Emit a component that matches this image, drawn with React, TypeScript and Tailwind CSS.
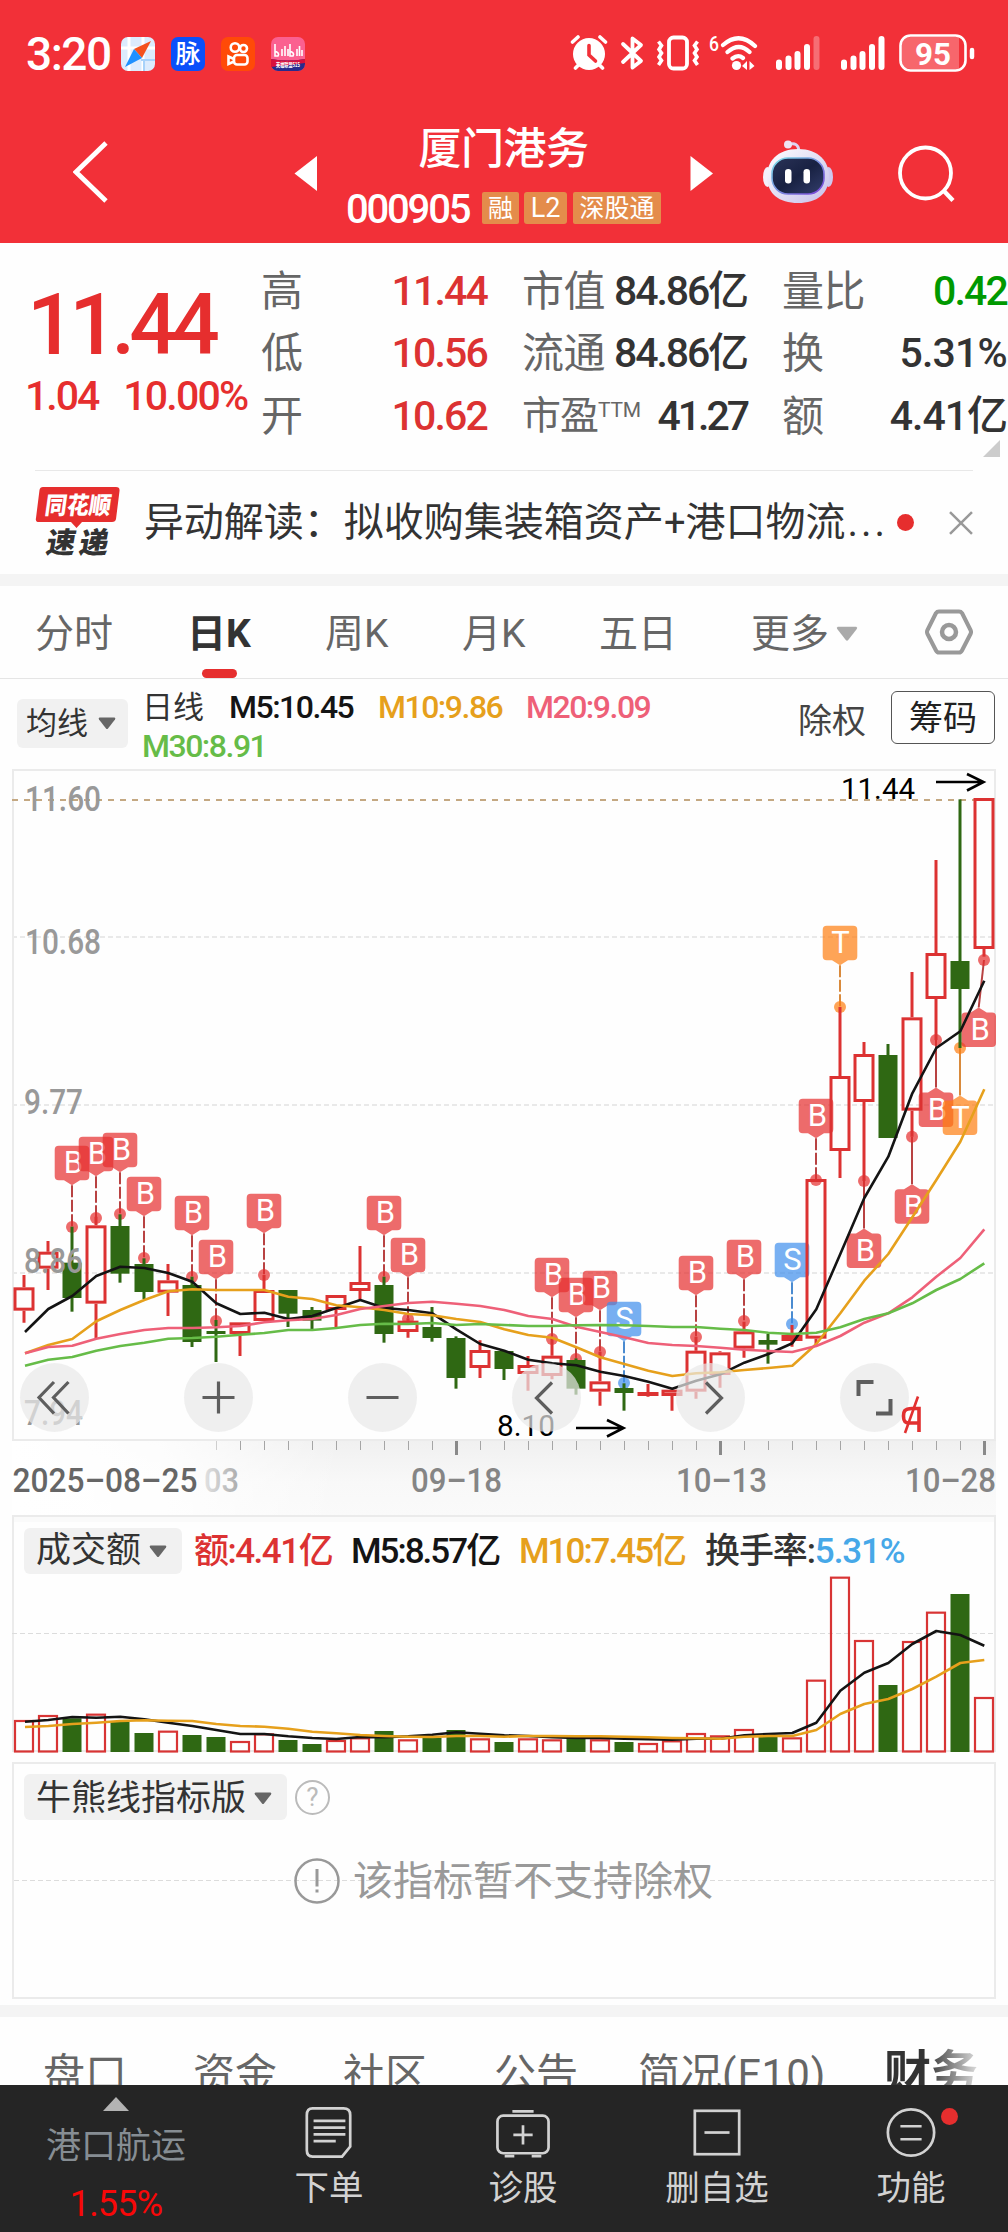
import type { ReactNode } from "react";

type Candle = [up: 0 | 1, high: number, top: number, bottom: number, low: number];

// Vertical chart unit: one third of a pixel, measured from y = 1100.
const CANDLES: Candle[] = [
  [1, 525, 562, 632, 668], [1, 423, 455, 506, 570], [0, 380, 488, 594, 635], [1, 350, 376, 611, 716],
  [0, 343, 378, 521, 548], [0, 475, 492, 576, 597], [1, 492, 541, 578, 648], [0, 530, 555, 726, 741],
  [0, 660, 693, 702, 786], [1, 667, 667, 702, 768], [1, 525, 570, 663, 663], [0, 570, 570, 641, 681],
  [0, 621, 630, 662, 693], [1, 585, 585, 630, 681], [1, 438, 546, 573, 597], [0, 530, 555, 702, 728],
  [1, 655, 662, 696, 713], [0, 621, 681, 714, 725], [0, 709, 714, 834, 866], [1, 721, 750, 804, 834],
  [0, 753, 753, 807, 840], [1, 768, 795, 822, 872], [1, 715, 767, 828, 838], [0, 775, 780, 866, 884],
  [1, 755, 844, 875, 917], [0, 850, 864, 879, 932], [1, 852, 876, 888, 890], [1, 868, 869, 888, 932],
  [1, 710, 752, 875, 896], [1, 754, 757, 825, 863], [1, 665, 694, 746, 773], [0, 702, 720, 734, 791],
  [1, 675, 705, 723, 740], [1, 240, 237, 716, 732], [1, -279, -72, 153, 234], [1, -174, -138, 6, 243],
  [0, -168, -135, 114, 114], [1, -384, -248, 32, 110], [1, -720, -441, -303, -180],
  [0, -902, -417, -333, -156], [1, -906, -906, -453, -430],
];

const MA5 = [696, 627, 588, 528, 500, 504, 519, 545, 610, 642, 638, 657, 648, 624, 600, 624, 630, 640, 688, 732, 752, 779, 790, 796, 815, 828, 845, 866, 842, 823, 788, 762, 730, 628, 462, 294, 170, -20, -156, -206, -358];
const MA10 = [760, 735, 717, 664, 630, 600, 574, 568, 570, 570, 570, 590, 597, 616, 622, 630, 642, 646, 657, 666, 688, 705, 713, 742, 772, 792, 812, 828, 820, 817, 810, 804, 797, 732, 640, 542, 462, 352, 240, 125, -32];
const MA20 = [760, 741, 737, 716, 702, 690, 684, 684, 682, 678, 667, 661, 657, 645, 627, 618, 609, 605, 611, 618, 630, 648, 657, 680, 696, 712, 729, 735, 738, 743, 749, 753, 756, 738, 708, 668, 640, 592, 530, 474, 388];
const MA30 = [797, 779, 771, 752, 738, 728, 716, 714, 710, 704, 699, 690, 690, 684, 675, 671, 672, 669, 675, 672, 675, 678, 678, 676, 675, 676, 678, 681, 681, 686, 690, 698, 702, 698, 682, 657, 640, 610, 570, 537, 490];

const VOLUMES = [660, 645, 655, 641, 666, 699, 692, 705, 711, 723, 700, 720, 732, 720, 712, 693, 718, 714, 690, 715, 726, 715, 718, 714, 718, 726, 729, 721, 699, 706, 687, 710, 712, 539, 230, 420, 555, 423, 335, 282, 591];
const VMA5 = [665, 660, 651, 653, 650, 658, 668, 678, 690, 702, 702, 709, 714, 717, 711, 712, 709, 704, 697, 701, 706, 708, 712, 714, 714, 716, 718, 719, 716, 716, 706, 702, 699, 668, 572, 518, 489, 432, 393, 405, 437];
const VMA10 = [681, 678, 672, 668, 663, 661, 662, 663, 672, 678, 680, 686, 695, 700, 705, 708, 710, 711, 708, 708, 710, 708, 708, 709, 709, 710, 712, 714, 715, 716, 710, 708, 708, 690, 642, 612, 597, 567, 530, 489, 480];

type Mark = { i: number; k: "B" | "S" | "T"; dot: number; down?: boolean; cx?: number };
const MARKS: Mark[] = [
  { i: 2, k: "B", dot: 381 }, { i: 3, k: "B", dot: 354 }, { i: 4, k: "B", dot: 342 }, { i: 5, k: "B", dot: 474 },
  { i: 7, k: "B", dot: 531 }, { i: 8, k: "B", dot: 663 }, { i: 10, k: "B", dot: 525 }, { i: 15, k: "B", dot: 531 },
  { i: 16, k: "B", dot: 657 }, { i: 22, k: "B", dot: 717 }, { i: 23, k: "B", dot: 777 }, { i: 24, k: "B", dot: 756 },
  { i: 25, k: "S", dot: 849 }, { i: 28, k: "B", dot: 711 }, { i: 30, k: "B", dot: 663 }, { i: 32, k: "S", dot: 672 },
  { i: 33, k: "B", dot: 240 }, { i: 34, k: "T", dot: -279 }, { i: 35, k: "B", dot: 243, down: true },
  { i: 37, k: "B", dot: 110, down: true }, { i: 38, k: "B", dot: -180, down: true },
  { i: 39, k: "T", dot: -156, down: true }, { i: 40, k: "B", dot: -420, down: true, cx: 978.7 },
];
const BOX = { B: "#e62e2e", S: "#3f8eec", T: "#ff7e11" };
const STEM = { B: "#b84242", S: "#4a8bd0", T: "#d98a3c" };

const px = (i: number) => 24 + i * 24;
const py = (z: number) => 1100 + z / 3;
const vy = (z: number) => 1500 + z / 3;
const path = (v: number[], y: (z: number) => number) =>
  v.map((z, i) => `${i ? "L" : "M"}${px(i) + (i ? 0.3 : 1)} ${y(z).toFixed(1)}`).join("");

function Marker({ i, k, dot, down, cx }: Mark) {
  const x = px(i);
  const bx = cx ?? x;
  const top = py(dot) + (down ? 52.5 : -81.3);
  const tip = down ? top - 5 : top + 39.5;
  const base = down ? top : top + 34.6;
  return (
    <g>
      <path d={`M${bx} ${tip}L${x} ${py(dot)}`} stroke={STEM[k]} strokeWidth={2} strokeDasharray={down ? undefined : "12 2.5"} />
      <g fill={BOX[k]} opacity={0.7}>
        <path d={`M${bx - 13.3} ${top}h26.6a4 4 0 0 1 4 4v26.6a4 4 0 0 1 -4 4h-26.6a4 4 0 0 1 -4 -4v-26.6a4 4 0 0 1 4 -4zM${bx - 8} ${base}L${bx} ${tip}L${bx + 8} ${base}z`} />
        <circle cx={x} cy={py(dot)} r={6} />
      </g>
      <text x={bx + (k === "B" ? 1.5 : 0.5)} y={top + 27.5} textAnchor="middle" fontSize={31} fill="#fff">{k}</text>
    </g>
  );
}

function RoundButton({ x, children }: { x: number; children: ReactNode }) {
  return (
    <g>
      <circle cx={x} cy={1397.5} r={34.5} fill="#e8e8e8" opacity={0.7} />
      <g fill="none" stroke="#5e5e5e" strokeWidth={3.2}>{children}</g>
    </g>
  );
}

function Num({ x, y, w, s, fill, children, weight = 500 }: { x: number; y: number; w: number; s: number; fill: string; children: string; weight?: number }) {
  return (
    <text x={x} y={y} textLength={w} lengthAdjust="spacingAndGlyphs" fontSize={s} fontWeight={weight} fill={fill}>{children}</text>
  );
}

function PriceChart() {
  return (
    <svg className="block" width={1008} height={746} viewBox="0 769 1008 746" fontFamily="Roboto, 'Noto Sans CJK SC', sans-serif">
      <defs>
        <linearGradient id="axis" x1="0" y1="0" x2="0" y2="1">
          <stop offset="0" stopColor="#f0f0f0" />
          <stop offset="0.55" stopColor="#f8f8f8" />
          <stop offset="1" stopColor="#fafafa" />
        </linearGradient>
        <linearGradient id="fade" x1="0" y1="0" x2="1" y2="0">
          <stop offset="0" stopColor="#fff" />
          <stop offset="0.45" stopColor="#fff" stopOpacity="0.85" />
          <stop offset="1" stopColor="#fff" stopOpacity="0" />
        </linearGradient>
        <linearGradient id="dateFade" x1="0" y1="0" x2="1" y2="0">
          <stop offset="0" stopColor="#e2e2e2" />
          <stop offset="1" stopColor="#acacac" />
        </linearGradient>
      </defs>
      <rect x="12" y="1440" width="984" height="76" fill="url(#axis)" />
      <rect x="12" y="1440" width="330" height="76" fill="url(#fade)" />
      <g stroke="#e9e9e9" strokeWidth="2" strokeDasharray="5 3">
        <path d="M12 937H994M12 1105H994M12 1273H994" />
      </g>
      <path d="M13 1440V770H995V1440z" fill="none" stroke="#ebebeb" strokeWidth="2" />
      <path d="M12 800H994" stroke="#c4a882" strokeWidth="2" strokeDasharray="6 6" />

      <g>
        {MARKS.map((m) => <Marker key={m.i} {...m} />)}
      </g>
      {CANDLES.map(([up, h, t, b, l], i) => {
        const x = px(i);
        return up ? (
          <g key={i} stroke="#dc3232" strokeWidth="3" fill="none">
            <path d={`M${x} ${py(h)}V${py(t)}M${x} ${py(b)}V${py(l)}`} />
            <rect x={x - 9} y={py(t) + 1.5} width="18" height={Math.max(py(b) - py(t) - 3, 0.5)} />
          </g>
        ) : (
          <g key={i} fill="#2f6813">
            <rect x={x - 1.5} y={py(h)} width="3" height={py(l) - py(h)} />
            <rect x={x - 9.5} y={py(t)} width="19" height={py(b) - py(t)} />
          </g>
        );
      })}
      <g fill="none" strokeWidth="2.6" strokeLinejoin="round">
        <path d={path(MA5, py)} stroke="#141414" />
        <path d={path(MA10, py)} stroke="#e6a01c" />
        <path d={path(MA20, py)} stroke="#ee6078" />
        <path d={path(MA30, py)} stroke="#66bc48" />
      </g>

      <Num x={25} y={811} w={76} s={35} fill="#999">11.60</Num>
      <Num x={25} y={954} w={76} s={35} fill="#999">10.68</Num>
      <Num x={24} y={1114} w={59} s={35} fill="#999">9.77</Num>
      <Num x={24} y={1272.7} w={59} s={35} fill="#999">8.86</Num>
      <Num x={24} y={1424.5} w={59} s={35} fill="#999">7.94</Num>
      <Num x={841} y={799} w={74} s={30} fill="#000" weight={400}>11.44</Num>
      <Num x={497} y={1435.5} w={58} s={30} fill="#000" weight={400}>8.10</Num>
      <g fill="none" stroke="#000" strokeWidth="2.6">
        <path d="M936 782H983M967 774L983.5 782L967 790.5" />
        <path d="M576 1428H623M607 1420L623.5 1428L607 1436.5" />
      </g>

      <RoundButton x={54.5}><path d="M54 1382L39 1397.5L54 1413.5M68.5 1382L53.5 1397.5L68.5 1413.5" /></RoundButton>
      <RoundButton x={218.5}><path d="M218.5 1381.5V1413.5M202.5 1397.5H234.5" /></RoundButton>
      <RoundButton x={382.5}><path d="M366.5 1397.5H398.5" /></RoundButton>
      <RoundButton x={546.5}><path d="M552 1382.5L536.5 1398L552 1413.5" /></RoundButton>
      <RoundButton x={710.5}><path d="M706 1382.5L721.5 1398L706 1413.5" /></RoundButton>
      <RoundButton x={874.5}><path d="M873.5 1382H858.5V1396M876 1413.5H890.5V1399" strokeWidth="4" /></RoundButton>
      <g fill="none" stroke="#e23030">
        <path d="M919 1432V1408.5H912C904 1408.5 903.5 1412 903.5 1416C903.5 1421 905 1423 909 1423H918" strokeWidth="3.6" />
        <path d="M918 1396.5L905 1433" strokeWidth="2.6" />
      </g>

      {Array.from({ length: 33 }, (_, n) => n + 8).map((i) =>
        i === 18 || i === 29 || i === 40 ? (
          <path key={i} d={`M${px(i) + 0.5} 1441V1455`} stroke="#8a8a8a" strokeWidth="3" />
        ) : (
          <path key={i} d={`M${px(i) + 0.5} 1441V1450`} stroke="#a5a5a5" strokeWidth="1" opacity={i === 8 ? 0.5 : 1} />
        ),
      )}
      <Num x={12.5} y={1491.7} w={185} s={34} fill="#666">2025–08–25</Num>
      <Num x={204} y={1491.7} w={35} s={34} fill="url(#dateFade)">03</Num>
      <Num x={411} y={1491.7} w={91} s={34} fill="#858585">09–18</Num>
      <Num x={676} y={1491.7} w={91} s={34} fill="#858585">10–13</Num>
      <Num x={905} y={1491.7} w={91} s={34} fill="#858585">10–28</Num>
    </svg>
  );
}

function VolumeChart() {
  return (
    <svg className="block" width={1008} height={247} viewBox="0 1515 1008 247">
      <rect x="12" y="1515" width="984" height="7" fill="#fafafa" />
      <path d="M13 1751V1516H995V1751z" fill="none" stroke="#ebebeb" strokeWidth="2" />
      <path d="M12 1633.5H994" stroke="#dcdcdc" strokeWidth="1" strokeDasharray="5 3" />
      {VOLUMES.map((z, i) =>
        CANDLES[i][0] ? (
          <rect key={i} x={px(i) - 9} y={vy(z) + 1} width="18" height={1751.5 - vy(z) - 1} fill="none" stroke="#d83434" strokeWidth="2.2" />
        ) : (
          <rect key={i} x={px(i) - 9.5} y={vy(z)} width="19" height={1752 - vy(z)} fill="#2f6813" />
        ),
      )}
      <g fill="none" strokeWidth="2.6" strokeLinejoin="round">
        <path d={path(VMA5, vy)} stroke="#141414" />
        <path d={path(VMA10, vy)} stroke="#e6a01c" />
      </g>
    </svg>
  );
}

const Caret = ({ className = "" }: { className?: string }) => (
  <svg className={className} width="18" height="13" viewBox="0 0 18 13"><path d="M1.5 .5h15q1.5 .5 .5 2L10 11.5q-1 1-2 0L1 2.5q-1-1.5 .5-2z" fill="currentColor" /></svg>
);

function StatusBar() {
  return (
    <div className="flex h-[104px] items-start pl-[26px] pt-[34px] text-white">
      <div className="h-[38px] w-[95px] text-[46px] font-medium leading-[40px] tracking-[-1.5px]">3:20</div>
      <div className="flex gap-4 pt-[3px]">
        <svg width="34" height="34" viewBox="0 0 34 34">
          <rect width="34" height="34" rx="7" fill="#dcebfd" />
          <path d="M8 0V34M0 11H34M22 0V34" stroke="#fff" strokeWidth="3" />
          <path d="M23 22V34M20 23H34" stroke="#a8d2fa" strokeWidth="2" />
          <path d="M30 4L13 12L21 21z" fill="#f4511e" />
          <path d="M13 12L21 21L4 30z" fill="#1e90ff" />
        </svg>
        <div className="flex h-[34px] w-[34px] items-center justify-center rounded-[7px] bg-[#0a50fa] text-[25px] font-medium leading-none">脉</div>
        <svg width="34" height="34" viewBox="0 0 34 34" fill="none" stroke="#fff" strokeWidth="2.6">
          <rect width="34" height="34" rx="7" fill="#ff4a08" stroke="none" />
          <circle cx="14" cy="10.5" r="4.3" /><circle cx="22.5" cy="11.5" r="3.5" />
          <rect x="13" y="18" width="13.5" height="9.5" rx="3" /><path d="M13 22L7.5 19.5V27L13 24.5" />
        </svg>
        <svg width="34" height="34" viewBox="0 0 34 34">
          <rect width="34" height="34" rx="7" fill="#fb6090" />
          <path d="M0 22Q17 25 34 22V27a7 7 0 0 1 -7 7H7a7 7 0 0 1 -7 -7z" fill="#282b8c" />
          <path d="M0 22Q17 25 34 22V26Q17 28 0 30z" fill="#d8103c" />
          <g fill="none" stroke="#fff" strokeWidth="1.6"><path d="M4 7V19H7Q9 16 4 14M11 12V19M14 9V19M17 12V19M19 7V19H22Q24 16 19 14M26 12V19M28.5 9V19M31 13V19" /></g>
          <text x="5" y="30" fontSize="6" fontWeight="700" fill="#fff" textLength="24" lengthAdjust="spacingAndGlyphs" fontFamily="'Noto Sans CJK SC', sans-serif">英雄联盟S15</text>
        </svg>
      </div>
      <svg className="ml-[265px]" width="38" height="38" viewBox="0 0 38 38" fill="none" stroke="#fff" strokeLinecap="round">
        <circle cx="19" cy="20" r="16" fill="#fff" stroke="none" />
        <path d="M2.5 8L8 3M30 3L35.5 8M8.5 31L5.5 34M29.5 31L32.5 34" strokeWidth="3.6" />
        <path d="M19 11.5V21L25.5 27" stroke="#f23038" strokeWidth="3.6" />
      </svg>
      <svg className="ml-3" width="24" height="38" viewBox="0 0 24 38" fill="none" stroke="#fff" strokeWidth="3.8" strokeLinejoin="round" strokeLinecap="round">
        <path d="M3 10L21 27L12.5 33.5V4.5L21 11L3 28" />
      </svg>
      <svg className="ml-3" width="44" height="38" viewBox="0 0 44 38" fill="none" stroke="#fff" strokeWidth="3.8">
        <rect x="13" y="3.5" width="18" height="31" rx="4.5" />
        <path d="M2.5 7.5L5.5 11.5L3 15.5L5.5 19L3 23L5.5 26.5L2.5 31M41.5 7.5L38.5 11.5L41 15.5L38.5 19L41 23L38.5 26.5L41.5 31" strokeWidth="3.6" />
      </svg>
      <svg className="ml-[9px]" width="50" height="38" viewBox="0 0 50 38" fill="none" stroke="#fff" strokeWidth="4.2" strokeLinecap="round">
        <text x="0" y="17" fontSize="21" fontWeight="500" fill="#fff" stroke="none" textLength="10" lengthAdjust="spacingAndGlyphs">6</text>
        <path d="M14 11Q30 -3 46 12M18.5 18Q30 8 40.5 18M23.5 24.5Q29 20 34 24" />
        <circle cx="27.5" cy="31.5" r="4.6" fill="#fff" stroke="none" />
        <path d="M33 32L38 27V36zM45.5 32L40.5 27V36z" fill="#fff" stroke="none" />
      </svg>
      <svg className="ml-[17px]" width="44" height="38" viewBox="0 0 44 38" fill="none" stroke="#fff" strokeWidth="6" strokeLinecap="round">
        <path d="M3 28.5V33M12.5 24.5V33M21.5 20V33M31 13V33" /><path d="M40.5 5V33" opacity="0.3" />
      </svg>
      <svg className="ml-[21px]" width="44" height="38" viewBox="0 0 44 38" fill="none" stroke="#fff" strokeWidth="6" strokeLinecap="round">
        <path d="M3 28.5V33M12.5 24.5V33M21.5 20V33M31 13V33M40.5 5V33" />
      </svg>
      <svg className="ml-3.5" width="76" height="38" viewBox="0 0 76 38" fill="none" stroke="#fff" strokeWidth="2.6">
        <path d="M12 3H60V35H12Q3 35 3 27V11Q3 3 12 3z" fill="#f7666c" stroke="none" />
        <rect x="1.5" y="1.5" width="65" height="35" rx="10" />
        <path d="M73 16V23" strokeWidth="4.5" strokeLinecap="round" />
        <text x="16" y="30.5" fontSize="32" fontWeight="700" fill="#fff" stroke="none" textLength="36" lengthAdjust="spacingAndGlyphs">95</text>
      </svg>
    </div>
  );
}

function Robot() {
  return (
    <svg width="70" height="64" viewBox="0 0 70 64">
      <defs>
        <linearGradient id="shell" x1="0" y1="0" x2="1" y2="1"><stop offset="0" stopColor="#fff" /><stop offset="1" stopColor="#c6bfea" /></linearGradient>
        <linearGradient id="face" x1="0" y1="0" x2="1" y2="1"><stop offset="0" stopColor="#2b3358" /><stop offset="0.5" stopColor="#182142" /><stop offset="1" stopColor="#333e6c" /></linearGradient>
        <linearGradient id="rim" x1="0" y1="0" x2="1" y2="1"><stop offset="0" stopColor="#7be0e6" /><stop offset="1" stopColor="#7a3fd8" /></linearGradient>
      </defs>
      <path d="M25 5Q35 1 36 11" fill="none" stroke="#ded4f0" strokeWidth="3" />
      <circle cx="25" cy="4.5" r="4" fill="#efe4f4" />
      <ellipse cx="4.5" cy="37" rx="4.5" ry="10" fill="#f4effa" /><ellipse cx="65.5" cy="37" rx="4.5" ry="10" fill="#cfc8ee" />
      <path d="M35 9C56 9 66 22 66 36C66 54 54 63 35 63S4 54 4 36C4 22 14 9 35 9z" fill="url(#shell)" />
      <rect x="9" y="18" width="52" height="36" rx="16" fill="url(#face)" stroke="url(#rim)" strokeWidth="1.6" />
      <rect x="22" y="29" width="6.5" height="14.5" rx="3.2" fill="#fff" /><rect x="40.5" y="29" width="6.5" height="14.5" rx="3.2" fill="#fff" />
    </svg>
  );
}

function Header() {
  return (
    <header className="h-[243px] bg-[#f23038]">
      <StatusBar />
      <div className="flex h-[139px] items-start text-white">
        <svg className="ml-[73px] mt-9" width="36" height="64" viewBox="0 0 36 64" fill="none" stroke="#fff" strokeWidth="4.8"><path d="M33 3L3 32L33 61" /></svg>
        <svg className="ml-[185px] mt-[52px]" width="24" height="35" viewBox="0 0 24 35"><path d="M.5 17.5L23 0V35z" fill="#fff" /></svg>
        <div className="ml-[27px] flex w-[317px] flex-col items-center">
          <div className="mt-[22px] h-[46px] text-[43px] font-medium leading-[46px] tracking-[-0.5px]">厦门港务</div>
          <div className="mt-[20px] flex h-8 items-center">
            <span className="mr-[13px] w-[123px] pt-[3px] text-[40px] font-medium leading-8 tracking-[-2.2px]">000905</span>
            <span className="mr-[5px] flex h-8 w-[37px] items-center justify-center rounded-[2px] bg-[#e48c4b] text-[25px] leading-none">融</span>
            <span className="mr-1.5 flex h-8 w-[43px] items-center justify-center rounded-[3px] bg-[#e48c4b] text-[27px] leading-none">L2</span>
            <span className="flex h-8 w-[88px] items-center justify-center rounded-[2px] bg-[#e48c4b] text-[25px] leading-none">深股通</span>
          </div>
        </div>
        <svg className="ml-[28px] mt-[52px]" width="24" height="35" viewBox="0 0 24 35"><path d="M23 17.5L.5 0V35z" fill="#fff" /></svg>
        <div className="ml-[49px] mt-[36px]"><Robot /></div>
        <svg className="ml-[64px] mt-10" width="60" height="60" viewBox="0 0 60 60" fill="none" stroke="#fff" strokeWidth="3.8"><circle cx="28.5" cy="29" r="25.5" /><path d="M46 46L56 56.5" strokeWidth="4.4" /></svg>
      </div>
    </header>
  );
}

function Stat({ label, value, tone = "text-[#333]", track = "tracking-[-1.8px]", sup }: { label: string; value: string; tone?: string; track?: string; sup?: string }) {
  return (
    <div className="flex h-[62.5px] items-center justify-between whitespace-nowrap">
      <span className="flex items-center text-[42px] tracking-[-0.5px] text-[#666]">
        {sup ? <span className="text-[39px] tracking-[-1px]">{label}</span> : label}
        {sup && <span className="-mt-3 text-[21px] tracking-[-0.3px]">{sup}</span>}
      </span>
      <span className={`text-[41px] font-medium ${track} ${tone}`}>{value}</span>
    </div>
  );
}

function Quote() {
  return (
    <section className="h-[227px] overflow-hidden">
      <div className="flex">
        <div className="w-[261px] pl-[25px] text-[#e62e2e]">
          <div className="mt-[38px] pl-0.5 text-[85px] font-medium leading-[88px] tracking-[-6px]">11.44</div>
          <div className="mt-[3px] flex gap-[25px] whitespace-nowrap text-[41px] font-medium leading-[48px] tracking-[-2px]">
            <span>1.04</span><span className="tracking-[-1.8px]">10.00%</span>
          </div>
        </div>
        <div className="mt-[17px] w-[226px]">
          <Stat label="高" value="11.44" tone="text-[#dc3232]" />
          <Stat label="低" value="10.56" tone="text-[#dc3232]" />
          <Stat label="开" value="10.62" tone="text-[#dc3232]" />
        </div>
        <div className="ml-[35px] mt-[17px] w-[225px]">
          <Stat label="市值" value="84.86亿" track="tracking-[-2.1px]" />
          <Stat label="流通" value="84.86亿" track="tracking-[-2.1px]" />
          <Stat label="市盈" value="41.27" sup="TTM" track="tracking-[-3px]" />
        </div>
        <div className="ml-[35px] mt-[17px] w-[225px]">
          <Stat label="量比" value="0.42" tone="text-[#009900]" />
          <Stat label="换" value="5.31%" track="tracking-[-0.8px]" />
          <Stat label="额" value="4.41亿" track="tracking-[-1px]" />
        </div>
      </div>
      <svg className="-mt-[8px] ml-[983px]" width="17" height="17" viewBox="0 0 17 17"><path d="M17 0V17H0z" fill="#ccc" /></svg>
    </section>
  );
}

function News() {
  return (
    <section className="mx-[35px] flex h-[104px] items-start border-t border-[#e8e8e8]">
      <div className="w-[109px] pt-4">
        <svg width="86" height="70" viewBox="0 0 86 70" fontFamily="'Noto Sans CJK SC', sans-serif" fontWeight="900">
          <path d="M8 0H81q4 0 3.5 4L81 32q-.5 3-4 3H47l-5.5 6L36 35H4q-4 0-3-4L4.5 3Q5 0 8 0z" fill="#e62e2e" />
          <text transform="translate(9 27) skewX(-8)" fontSize="24" textLength="66" lengthAdjust="spacingAndGlyphs" fill="#fff">同花顺</text>
          <text transform="translate(10 66) skewX(-10)" fontSize="29" fill="#333">速</text>
          <text transform="translate(43 66) skewX(-10)" fontSize="29" fill="#333">递</text>
        </svg>
      </div>
      <div className="w-[754px] whitespace-nowrap pt-[22px] text-[40px] leading-[60px] text-[#333]">
        异动解读：拟收购集装箱资产<span className="text-[38px]">+</span>港口物流<span className="ml-0.5 tracking-[3px]">...</span>
      </div>
      <div className="mt-[43px] h-[17px] w-[17px] rounded-full bg-[#e62e2e]" />
      <svg className="ml-[35px] mt-10" width="24" height="24" viewBox="0 0 24 24" fill="none" stroke="#999" strokeWidth="2.5"><path d="M1 1L23 23M23 1L1 23" /></svg>
    </section>
  );
}

function PeriodTabs() {
  return (
    <nav className="flex h-[93px] items-start whitespace-nowrap border-b border-[#e5e5e5] pl-[35px] pt-[18px] text-[39px] leading-[60px] text-[#666]">
      <span className="w-[152px]">分时</span>
      <span className="w-[138px] font-bold text-[#333]">
        日K
        <i className="ml-[15px] mt-[5px] block h-[9px] w-[35px] rounded-full bg-[#e62e2e]" />
      </span>
      <span className="w-[137px]">周K</span>
      <span className="w-[137px]">月K</span>
      <span className="w-[152px]">五日</span>
      <span className="flex w-[174px] items-center">更多<Caret className="ml-[7px] h-[18px] w-[22px] text-[#aaa]" /></span>
      <svg className="mt-[5px]" width="48" height="46" viewBox="0 0 48 46" fill="none" stroke="#999" strokeWidth="4" strokeLinejoin="round">
        <path d="M14 2.5H34Q36 2.5 37 4L45.5 21Q46.5 23 45.5 25L37 41.5Q36 43.5 34 43.5H14Q12 43.5 11 41.5L2.5 25Q1.5 23 2.5 21L11 4Q12 2.5 14 2.5z" /><circle cx="24" cy="23" r="7" strokeWidth="4.5" />
      </svg>
    </nav>
  );
}

function Legend() {
  return (
    <div className="flex h-[90px] items-start whitespace-nowrap">
      <div className="ml-[17px] mt-5 flex h-[49px] w-[111px] items-center rounded-md bg-[#f1f1f1] pl-[9px] text-[31px] leading-none text-[#333]">
        均线<Caret className="ml-[10px] text-[#666]" />
      </div>
      <div className="ml-[14px] mt-[9px] w-[642px] text-[32px] font-medium leading-[39px] tracking-[-1.5px]">
        <div className="flex h-[39px]">
          <span className="w-[87px] text-[31px] font-normal tracking-normal text-[#333]">日线</span>
          <span className="w-[149px] text-[#141414]">M5:10.45</span>
          <span className="w-[148px] text-[#e6a01c]">M10:9.86</span>
          <span className="text-[#ee6078]">M20:9.09</span>
        </div>
        <div className="text-[#66bc48]">M30:8.91</div>
      </div>
      <div className="ml-[14px] mt-[18px] w-[93px] text-[34px] leading-[48px] text-[#444]">除权</div>
      <div className="mt-3 flex h-[53px] w-[104px] items-center justify-center rounded-md border border-[#555] pt-px text-[34px] leading-none text-[#222]">筹码</div>
    </div>
  );
}

function NavItem({ label, dot, children }: { label: string; dot?: boolean; children: ReactNode }) {
  return (
    <div className="relative flex w-[194px] flex-col items-center pt-[20px]">
      <svg width="54" height="56" viewBox="0 0 56 56" fill="none" stroke="#d2d2d2" strokeWidth="2.8">{children}</svg>
      {dot && <i className="absolute left-[127px] top-[23px] h-[17px] w-[17px] rounded-full bg-[#e62e2e]" />}
      <span className="mt-[6px] text-[34.5px] leading-[42px] text-[#d2d2d2]">{label}</span>
    </div>
  );
}

export default function App() {
  return (
    <div className="flex h-[2232px] w-[1008px] flex-col overflow-hidden bg-[#fefefe] font-[Roboto,'Noto_Sans_CJK_SC',sans-serif]">
      <Header />
      <Quote />
      <News />
      <div className="h-3 bg-[#f4f4f4]" />
      <PeriodTabs />
      <Legend />
      <PriceChart />

      <section className="relative">
        <VolumeChart />
        <div className="absolute left-6 top-3 flex items-center whitespace-nowrap text-[35px] font-medium leading-[46px] tracking-[-1.5px]">
          <div className="flex h-[46px] w-[158px] items-center rounded-md bg-[#f1f1f1] pl-[12px] font-normal tracking-normal text-[#333]">
            成交额<Caret className="ml-2 text-[#666]" />
          </div>
          <span className="ml-[12px] mt-0.5 w-[157px] text-[#dc3232]">额:4.41亿</span>
          <span className="mt-0.5 w-[168px] tracking-[-2px] text-[#141414]">M5:8.57亿</span>
          <span className="mt-0.5 w-[186px] tracking-[-2px] text-[#e6a01c]">M10:7.45亿</span>
          <span className="mt-0.5 tracking-[-1.1px] text-[#333]">换手率:<span className="text-[#46a8e8]">5.31%</span></span>
        </div>
      </section>

      <section className="mx-3 h-[237px] border-2 border-[#ebebeb] pl-2.5 pt-2.5">
        <div className="flex items-center">
          <div className="flex h-[46px] w-[263px] items-center whitespace-nowrap rounded-md bg-[#f1f1f1] pl-[12px] pt-0.5 text-[35px] leading-none text-[#333]">
            牛熊线指标版<Caret className="ml-2 text-[#666]" />
          </div>
          <div className="ml-2 flex h-[35px] w-[35px] items-center justify-center rounded-full border-2 border-[#bbb] text-[26px] leading-none text-[#bbb]">?</div>
        </div>
        <div className="relative -ml-2.5 mt-[36px] flex h-[50px] items-center pl-[280px]">
          <div className="absolute inset-x-0 top-[24px] h-px bg-[repeating-linear-gradient(90deg,#dcdcdc_0_5px,transparent_5px_8px)]" />
          <svg className="relative" width="46" height="46" viewBox="0 0 46 46" fill="none" stroke="#999" strokeWidth="2.5"><circle cx="23" cy="23" r="21.5" /><path d="M23 11V28.5M23 31.5V34.5" strokeWidth="3" /></svg>
          <span className="relative ml-[13px] mt-0.5 whitespace-nowrap text-[40px] leading-[50px] text-[#999]">该指标暂不支持除权</span>
        </div>
      </section>

      <div className="mt-1.5 h-3 shrink-0 bg-[#f4f4f4]" />
      <nav className="flex h-[68px] shrink-0 overflow-hidden whitespace-nowrap pl-[43px] pt-[28px] text-[42px] leading-[60px] text-[#666]">
        <span className="w-[150px]">盘口</span>
        <span className="w-[150px]">资金</span>
        <span className="w-[151px]">社区</span>
        <span className="w-[144px]">公告</span>
        <span className="w-[246px]">简况<span className="tracking-[1px]">(F10)</span></span>
        <span className="-mt-0.5 bg-[linear-gradient(90deg,#333_45%,#ddd_100%)] bg-clip-text text-[47px] font-bold text-transparent">财务</span>
      </nav>

      <footer className="flex h-[147px] shrink-0 bg-[#252525]">
        <div className="flex w-[232px] flex-col items-center pt-3">
          <svg width="26" height="14" viewBox="0 0 26 14"><path d="M13 0L26 14H0z" fill="#b3b3b3" /></svg>
          <span className="mt-[15px] text-[35px] leading-[42px] text-[#868d93]">港口航运</span>
          <span className="mt-[16px] text-[36px] leading-[40px] tracking-[-0.8px] text-[#f80808]">1.55%</span>
        </div>
        <NavItem label="下单">
          <path d="M11 2.5H43Q50 2.5 50 9.5V42L41.5 52.5H11Q5 52.5 5 46V9.5Q5 2.5 11 2.5z" /><path d="M12 15.5H45M12 22.5H45M12 29.5H45M12 36.5H35" />
        </NavItem>
        <NavItem label="诊股">
          <rect x="1.5" y="10" width="53" height="39" rx="6" /><path d="M17 5.5H39M28 20V40M18 30H38M9 52H19M37 52H47" />
        </NavItem>
        <NavItem label="删自选"><rect x="5" y="5" width="46" height="45" /><path d="M15 27.5H41" /></NavItem>
        <NavItem label="功能" dot><circle cx="28" cy="27.5" r="24" /><path d="M17 21H39M17 34.5H39" /></NavItem>
      </footer>
    </div>
  );
}
